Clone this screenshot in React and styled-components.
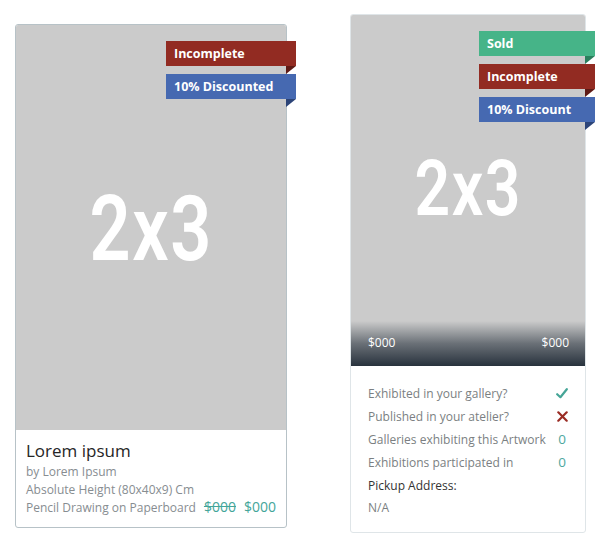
import React from "react";
import styled, { createGlobalStyle } from "styled-components";

const Global = createGlobalStyle`
  html, body { margin: 0; padding: 0; background: #ffffff; }
  body { font-family: "Open Sans", "Liberation Sans", sans-serif; }
  * { box-sizing: border-box; }
`;

const Page = styled.div`
  display: flex;
  align-items: flex-start;
  gap: 63px;
  padding: 14px 0 0 15px;
`;

const Card = styled.div`
  width: ${(p) => p.$width}px;
  margin-top: ${(p) => p.$offset || 0}px;
  border: 1px solid ${(p) => p.$border};
  border-radius: 3px;
  background: #fff;
  display: flex;
  flex-direction: column;
`;

const Picture = styled.div`
  position: relative;
  height: ${(p) => p.$height}px;
  background: #cbcbcb;
  border-radius: 2px 2px 0 0;
  display: flex;
  align-items: center;
  justify-content: center;
`;

const Ratio = styled.span`
  display: inline-block;
  font-family: Roboto, "DejaVu Sans", sans-serif;
  font-weight: 600;
  font-size: ${(p) => p.$size}px;
  line-height: 1;
  letter-spacing: 2px;
  color: #ffffff;
  transform: scaleX(0.8);
  margin-top: ${(p) => p.$shift || 0}px;
`;

const Tags = styled.div`
  position: absolute;
  top: 16px;
  right: -10px;
  display: flex;
  flex-direction: column;
  align-items: flex-end;
  gap: 8px;
`;

const Tag = styled.div`
  position: relative;
  width: ${(p) => p.$width}px;
  height: 25px;
  line-height: 25px;
  padding-left: 8px;
  background: ${(p) => p.$bg};
  color: #fff;
  font-size: 12.5px;
  font-weight: 700;
  white-space: nowrap;
  &::after {
    content: "";
    position: absolute;
    top: 100%;
    right: 0;
    width: 0;
    height: 0;
    border-top: 8px solid ${(p) => p.$fold};
    border-right: 10px solid transparent;
  }
`;

const PriceBar = styled.div`
  position: absolute;
  left: 0;
  right: 0;
  bottom: 0;
  height: 45px;
  padding: 0 16px 2px 17px;
  display: flex;
  align-items: center;
  justify-content: space-between;
  background: linear-gradient(to bottom, rgba(42, 52, 63, 0) 0%, rgba(42, 52, 63, 0.6) 50%, rgba(40, 50, 61, 1) 100%);
  color: #fff;
  font-size: 12px;
`;

const Info = styled.div`
  padding: 10px 10px 10px 10px;
`;

const Title = styled.div`
  font-size: 17px;
  font-weight: 500;
  line-height: 22px;
  color: #262626;
  margin-bottom: 1px;
`;

const Line = styled.div`
  font-size: 12px;
  line-height: 17.5px;
  color: #878d91;
  display: flex;
  align-items: baseline;
`;

const Prices = styled.div`
  margin-left: auto;
  display: flex;
  gap: 8px;
  font-size: 14px;
  color: #44a599;
`;

const Old = styled.span`
  text-decoration: line-through;
`;

const List = styled.div`
  padding: 16px 12px 14px 17px;
  display: grid;
  grid-template-columns: 1fr 22px;
`;

const Label = styled.div`
  font-size: 12px;
  line-height: 23px;
  color: #7b7f82;
  white-space: nowrap;
`;

const Value = styled.div`
  line-height: 23px;
  font-size: 13.5px;
  color: #4ea89e;
  display: flex;
  align-items: center;
  justify-content: center;
`;

const Full = styled.div`
  grid-column: 1 / -1;
  font-size: 12px;
  line-height: ${(p) => (p.$strong ? 23 : 21)}px;
  color: ${(p) => (p.$strong ? "#333" : "#7b7f82")};
`;

const Check = () => (
  <svg width="12" height="11" viewBox="0 0 12 11">
    <path d="M1.2 6.2 L4.4 9.2 L10.8 1.2" fill="none" stroke="#45a597" strokeWidth="2.2" strokeLinecap="round" strokeLinejoin="round" />
  </svg>
);

const Cross = () => (
  <svg width="11" height="11" viewBox="0 0 11 11">
    <path d="M1.3 1.3 L9.7 9.7 M9.7 1.3 L1.3 9.7" fill="none" stroke="#9a2c24" strokeWidth="2.2" strokeLinecap="round" />
  </svg>
);

export default function App() {
  return (
    <>
      <Global />
      <Page>
        <Card $width={272} $offset={10} $border="#b7c2c7">
          <Picture $height={405}>
            <Ratio $size={90} $shift={4}>2x3</Ratio>
            <Tags>
              <Tag $width={130} $bg="#922b22" $fold="#5e1a15">Incomplete</Tag>
              <Tag $width={130} $bg="#4669b1" $fold="#2c4478">10% Discounted</Tag>
            </Tags>
          </Picture>
          <Info>
            <Title>Lorem ipsum</Title>
            <Line>by Lorem Ipsum</Line>
            <Line>Absolute Height (80x40x9) Cm</Line>
            <Line>
              Pencil Drawing on Paperboard
              <Prices>
                <Old>$000</Old>
                <span>$000</span>
              </Prices>
            </Line>
          </Info>
        </Card>
        <Card $width={236} $border="#dfe5e8">
          <Picture $height={351}>
            <Ratio $size={78} $shift={-4}>2x3</Ratio>
            <Tags>
              <Tag $width={116} $bg="#46b488" $fold="#2b7f5d">Sold</Tag>
              <Tag $width={116} $bg="#922b22" $fold="#5e1a15">Incomplete</Tag>
              <Tag $width={116} $bg="#4669b1" $fold="#2c4478">10% Discount</Tag>
            </Tags>
            <PriceBar>
              <span>$000</span>
              <span>$000</span>
            </PriceBar>
          </Picture>
          <List>
            <Label>Exhibited in your gallery?</Label>
            <Value><Check /></Value>
            <Label>Published in your atelier?</Label>
            <Value><Cross /></Value>
            <Label>Galleries exhibiting this Artwork</Label>
            <Value>0</Value>
            <Label>Exhibitions participated in</Label>
            <Value>0</Value>
            <Full $strong>Pickup Address:</Full>
            <Full>N/A</Full>
          </List>
        </Card>
      </Page>
    </>
  );
}
